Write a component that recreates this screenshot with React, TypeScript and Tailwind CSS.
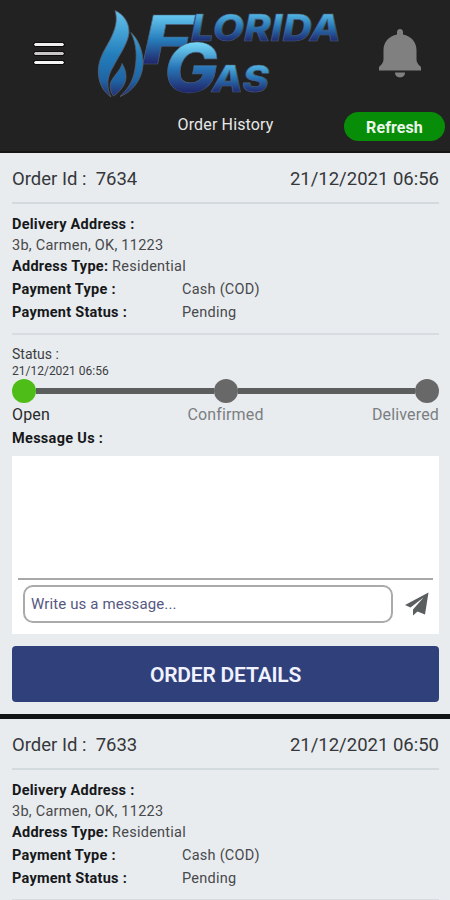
import React from "react";

function Flame() {
  return (
    <g stroke="#58606e" strokeWidth="0.8" strokeLinejoin="round">
      <path
        fill="url(#flame)"
        d="M25 10.5C28 20 25.500 29 20 40C14 51 7 61 8.500 75C9.500 85 14 92 21 97C16 87 17 77 23 67C30 54 38 43 39 33C39.500 22 33 14 25 10.500Z"
      />
      <path
        fill="url(#flame)"
        d="M41 32.500C47 45 47 57 45 69C43 82 37 90 30 96.500C42 92 52 80 53 65C53.500 51 48 39 41 32.500Z"
      />
      <path
        fill="url(#flame)"
        d="M32 63.500C31 70 23 76 20.500 83C19.500 88 21 93 23.500 96C30 92 36 84 36 77C36 71 34 67 32 63.500Z"
      />
    </g>
  );
}

function Logo() {
  const letters = {
    fontFamily: 'Inter, "Liberation Sans", sans-serif',
    fontWeight: 800,
    fontStyle: "italic",
    stroke: "#4b5f7c",
    strokeWidth: 0.6,
  };
  return (
    <svg width="250" height="104" viewBox="0 0 250 104" className="block overflow-visible" aria-label="Florida Gas">
      <defs>
        <linearGradient id="flame" gradientUnits="userSpaceOnUse" x1="0" y1="10" x2="0" y2="98">
          <stop offset="0" stopColor="#65c3ec" />
          <stop offset="0.5" stopColor="#247fbc" />
          <stop offset="0.8" stopColor="#1f63a4" />
          <stop offset="1" stopColor="#232c6c" />
        </linearGradient>
        <linearGradient id="bigF" gradientUnits="userSpaceOnUse" x1="0" y1="14" x2="0" y2="64">
          <stop offset="0" stopColor="#6acbf2" />
          <stop offset="0.5" stopColor="#287fbd" />
          <stop offset="1" stopColor="#202468" />
        </linearGradient>
        <linearGradient id="bigG" gradientUnits="userSpaceOnUse" x1="0" y1="42" x2="0" y2="93">
          <stop offset="0" stopColor="#78daf8" />
          <stop offset="0.5" stopColor="#2877b8" />
          <stop offset="1" stopColor="#202468" />
        </linearGradient>
        <linearGradient id="top" gradientUnits="userSpaceOnUse" x1="0" y1="13" x2="0" y2="41">
          <stop offset="0" stopColor="#55b9e6" />
          <stop offset="0.5" stopColor="#2875b5" />
          <stop offset="1" stopColor="#202a70" />
        </linearGradient>
        <linearGradient id="bottom" gradientUnits="userSpaceOnUse" x1="0" y1="64" x2="0" y2="92">
          <stop offset="0" stopColor="#55b9e6" />
          <stop offset="0.5" stopColor="#2875b5" />
          <stop offset="1" stopColor="#202a70" />
        </linearGradient>
      </defs>
      <Flame />
      <g style={letters}>
        <text x="52" y="63.500" fontSize="67" fill="url(#bigF)" textLength="50" lengthAdjust="spacingAndGlyphs">F</text>
        <text x="101" y="40.500" fontSize="37" fill="url(#top)" textLength="150" lengthAdjust="spacingAndGlyphs">LORIDA</text>
        <text x="74" y="92" fontSize="67" fill="url(#bigG)" textLength="54" lengthAdjust="spacingAndGlyphs">G</text>
        <text x="122" y="92" fontSize="37" fill="url(#bottom)" textLength="57" lengthAdjust="spacingAndGlyphs">AS</text>
      </g>
    </svg>
  );
}

function Bell() {
  return (
    <svg width="44" height="50" viewBox="0 0 44 50" className="block">
      <path
        fill="#808080"
        d="M22 1C24 1 25 2.500 25 4.500V6.500C33 8 38.500 14 38.500 22V31C38.500 35 41 37 43 39V42.500H1V39C3 37 5.500 35 5.500 31V22C5.500 14 11 8 19 6.500V4.500C19 2.500 20 1 22 1Z"
      />
      <path fill="#808080" d="M17 44.500H27C27 51 17 51 17 44.500Z" />
    </svg>
  );
}

function Header() {
  return (
    <header className="h-[153px] border-b-2 border-[#161616] bg-[#222222]">
      <div className="flex h-[104px]">
        <div className="flex w-[90px] shrink-0 flex-col gap-[6px] pt-[43px] pl-[34px]">
          <div className="h-[3px] w-[30px] rounded-sm bg-[#f0eeee] outline-1 outline-[#0c0c0c]" />
          <div className="h-[3px] w-[30px] rounded-sm bg-[#c9c7c7] outline-1 outline-[#0c0c0c]" />
          <div className="h-[3px] w-[30px] rounded-sm bg-[#f5f5f5] outline-1 outline-[#0c0c0c]" />
        </div>
        <Logo />
        <div className="-ml-[38px] pt-7 pl-[76px]">
          <Bell />
        </div>
      </div>
      <div className="grid grid-cols-[1fr_100px_1fr] items-center pr-[5px]">
        <div className="col-start-2 mt-[5px] ml-[5px] whitespace-nowrap text-center text-[16px] leading-5 tracking-[0.150px] text-[#e8e8e8]">
          Order History
        </div>
        <button className="mt-2 h-[29px] w-[101px] justify-self-end rounded-full bg-[#078d07] pt-[2px] text-[16px] font-bold tracking-[0.100px] text-[#e9f6e9]">
          Refresh
        </button>
      </div>
    </header>
  );
}

function OrderSummary({ id, date }: { id: string; date: string }) {
  return (
    <>
      <div className="flex h-[51px] items-center justify-between border-b-2 border-[#d3dade] pt-[5px] text-[18.500px] text-[#35373a]">
        <span className="whitespace-pre">Order Id :  {id}</span>
        <span>{date}</span>
      </div>
      <div className="h-[129px] pt-[10px] text-[14.500px] leading-[21px] tracking-[0.250px] text-[#48494b]">
        <div className="font-bold text-[#17181a]">Delivery Address :</div>
        <div>3b, Carmen, OK, 11223</div>
        <div><span className="font-bold text-[#17181a]">Address Type:</span> Residential</div>
        <div className="grid grid-cols-[170px_1fr] pt-px leading-[23.250px]">
          <span className="font-bold text-[#17181a]">Payment Type :</span>
          <span>Cash (COD)</span>
          <span className="font-bold text-[#17181a]">Payment Status :</span>
          <span>Pending</span>
        </div>
      </div>
      <div className="h-0.5 bg-[#d6dce0]" />
    </>
  );
}

function StatusTracker() {
  return (
    <div className="pt-[10px] text-[#3c3d3f]">
      <div className="text-[14px] leading-[18px]">Status :</div>
      <div className="text-[12px] leading-[16px]">21/12/2021 06:56</div>
      <div className="flex h-6 items-center">
        <div className="size-6 rounded-full bg-[#4fbd17]" />
        <div className="h-[6px] flex-1 bg-[#5c5e5e]" />
        <div className="size-6 rounded-full bg-[#686868]" />
        <div className="h-[6px] flex-1 bg-[#5c5e5e]" />
        <div className="size-6 rounded-full bg-[#686868]" />
      </div>
      <div className="grid grid-cols-3 text-[16px] leading-6 tracking-[0.150px] text-[#7b7e81]">
        <span className="text-[#292a2c]">Open</span>
        <span className="text-center">Confirmed</span>
        <span className="text-right">Delivered</span>
      </div>
    </div>
  );
}

function MessageBox() {
  return (
    <div className="flex h-[178px] flex-col bg-white px-[6px]">
      <div className="h-[124px] border-b-2 border-[#a8a8a8]" />
      <div className="mt-[5px] flex items-center gap-3 pl-[5px]">
        <div className="flex h-[38px] w-[370px] items-center rounded-[10px] border-2 border-[#aaaaaa] pt-px pl-[6px] text-[15px] tracking-[0.120px] text-[#565881]">
          Write us a message...
        </div>
        <svg width="24" height="24" viewBox="0 0 24 24">
          <path fill="#5b5e5e" d="M23.500 0.500 0 13 5.500 15.500 18.500 5.500 8 17.500V23.500L12.500 19.500 20 22.500Z" />
        </svg>
      </div>
    </div>
  );
}

export default function App() {
  return (
    <div className="h-[900px] w-[450px] overflow-hidden bg-[#e8ecef] font-[Roboto,sans-serif]">
      <Header />
      <section className="h-[561px] pr-[11px] pl-3">
        <OrderSummary id="7634" date="21/12/2021 06:56" />
        <StatusTracker />
        <div className="pb-[6px] text-[14.500px] leading-[23px] font-bold tracking-[0.300px] text-[#17181a]">Message Us :</div>
        <MessageBox />
        <button className="mt-3 h-14 w-full rounded-[4px] bg-[#30407b] pt-[3px] text-[21px] font-semibold tracking-[-0.200px] text-[#f0f3ff]">
          ORDER DETAILS
        </button>
      </section>
      <div className="h-[5px] bg-[#101414]" />
      <section className="pr-[11px] pl-3">
        <OrderSummary id="7633" date="21/12/2021 06:50" />
      </section>
    </div>
  );
}
